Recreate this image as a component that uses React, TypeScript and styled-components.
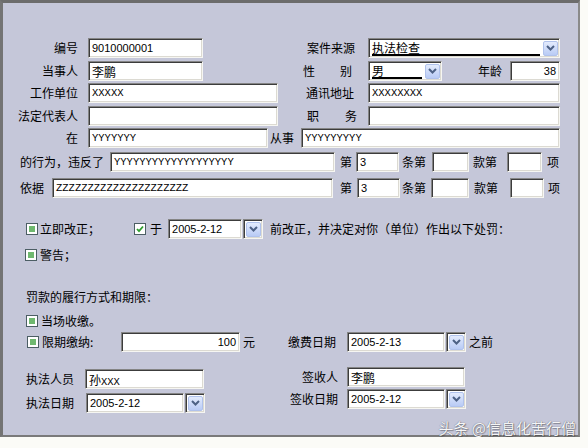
import styled, { createGlobalStyle, css } from "styled-components";

const GlobalStyle = createGlobalStyle`
  html, body {
    margin: 0;
    padding: 0;
    background: #fbfbf7;
  }
  body {
    font-family: "Noto Sans CJK SC", "Liberation Sans", sans-serif;
    font-size: 12px;
    color: #000;
  }
`;

const sunken = css`
  box-sizing: border-box;
  background: #fff;
  border-top: 1px solid #858585;
  border-left: 1px solid #858585;
  border-right: 1px solid #f6f6f2;
  border-bottom: 1px solid #f6f6f2;
  box-shadow: inset 1px 1px 0 #3c3c3c, inset -1px -1px 0 #dcdad2;
`;

const fonts = {
  num: css`
    font-family: "Liberation Sans", "Noto Sans CJK SC", sans-serif;
    font-size: 11px;
  `,
  mono: css`
    font-family: "Liberation Mono", "Noto Sans CJK SC", monospace;
    font-size: 10.5px;
  `,
  cjk: css`
    font-family: "Noto Sans CJK SC", "Liberation Sans", sans-serif;
    font-size: 12px;
  `,
};

type FontKind = keyof typeof fonts;

const Panel = styled.div`
  position: relative;
  box-sizing: border-box;
  width: 580px;
  height: 437px;
  background: #c5c7d9;
  border-top: 3px solid #6c6c6c;
  border-left: 3px solid #747474;
  border-right: 2px solid #8a8a8a;
  border-bottom: 2px solid #7a7a7a;
  display: flex;
  flex-direction: column;
`;

const Row = styled.div<{ $mt: number }>`
  display: flex;
  align-items: center;
  flex: none;
  height: 20px;
  margin-top: ${(p) => p.$mt}px;
`;

const Label = styled.span<{ $w?: number; $ml?: number; $right?: boolean }>`
  flex: none;
  width: ${(p) => (p.$w ? `${p.$w}px` : "auto")};
  margin-left: ${(p) => p.$ml || 0}px;
  text-align: ${(p) => (p.$right ? "right" : "left")};
  line-height: 14px;
  white-space: nowrap;
`;

const Spread = styled(Label)`
  display: flex;
  justify-content: space-between;
`;

const Box = styled.div<{ $w: number; $ml?: number; $right?: boolean; $font?: FontKind }>`
  ${sunken};
  flex: none;
  width: ${(p) => p.$w}px;
  height: 20px;
  margin-left: ${(p) => p.$ml || 0}px;
  padding: 0 3px;
  display: flex;
  align-items: center;
  justify-content: ${(p) => (p.$right ? "flex-end" : "flex-start")};
  white-space: nowrap;
  overflow: hidden;
  ${(p) => fonts[p.$font || "num"]};
`;

const Mono = styled.span`
  ${fonts.mono};
`;

const SelectBox = styled.div<{ $w: number; $ml?: number }>`
  ${sunken};
  flex: none;
  width: ${(p) => p.$w}px;
  height: 20px;
  margin-left: ${(p) => p.$ml || 0}px;
  padding: 0 1px 0 3px;
  display: flex;
  align-items: center;
  gap: 3px;
`;

const Chosen = styled.span`
  flex: 1;
  line-height: 13px;
  margin-top: 1px;
  border-bottom: 2px solid #000;
`;

const DateWrap = styled.div<{ $ml?: number }>`
  flex: none;
  display: flex;
  gap: 1px;
  margin-left: ${(p) => p.$ml || 0}px;
`;

const ButtonWell = styled.div`
  ${sunken};
  width: 20px;
  height: 20px;
  display: flex;
  align-items: center;
  justify-content: center;
`;

const DropBtn = styled.span`
  box-sizing: border-box;
  width: 15px;
  height: 15px;
  border: 1px solid #b0c2ec;
  border-radius: 2px;
  background: linear-gradient(#e3ebfd, #b9cbf5);
  display: flex;
  align-items: center;
  justify-content: center;
`;

const CheckBox = styled.span<{ $ml?: number }>`
  box-sizing: border-box;
  flex: none;
  width: 12px;
  height: 12px;
  margin-left: ${(p) => p.$ml || 0}px;
  border: 1px solid #4c5e64;
  background: #fff;
  display: flex;
  align-items: center;
  justify-content: center;
`;

const Fill = styled.span`
  width: 6px;
  height: 6px;
  background: #6fb86f;
`;

const Bottom = styled.div`
  display: flex;
  margin-top: 15px;
`;

const Column = styled.div<{ $w?: number; $pl?: number; $pt?: number }>`
  display: flex;
  flex-direction: column;
  box-sizing: border-box;
  width: ${(p) => (p.$w ? `${p.$w}px` : "auto")};
  padding-left: ${(p) => p.$pl || 0}px;
  padding-top: ${(p) => p.$pt || 0}px;
`;

const Watermark = styled.div`
  position: absolute;
  right: 2px;
  bottom: -1px;
  font-size: 15px;
  line-height: 17px;
  color: rgba(255, 255, 255, 0.95);
  text-shadow: 0 0 1px rgba(60, 60, 70, 0.8), 1px 1px 1px rgba(0, 0, 0, 0.3);
  white-space: nowrap;
`;

function Chevron() {
  return (
    <svg width="9" height="6" viewBox="0 0 9 6">
      <path d="M1 1l3.5 3.5L8 1" stroke="#4d6185" strokeWidth="2" fill="none" />
    </svg>
  );
}

function Drop() {
  return (
    <DropBtn>
      <Chevron />
    </DropBtn>
  );
}

function DateField({ value, w, ml }: { value: string; w: number; ml?: number }) {
  return (
    <DateWrap $ml={ml}>
      <Box $w={w}>{value}</Box>
      <ButtonWell>
        <Drop />
      </ButtonWell>
    </DateWrap>
  );
}

function Select({ value, w, ml }: { value: string; w: number; ml?: number }) {
  return (
    <SelectBox $w={w} $ml={ml}>
      <Chosen>{value}</Chosen>
      <Drop />
    </SelectBox>
  );
}

function Check({ checked, ml }: { checked?: boolean; ml?: number }) {
  return (
    <CheckBox $ml={ml}>
      {checked ? (
        <svg width="8" height="8" viewBox="0 0 8 8">
          <path d="M1 4l2 2.2L7 1.5" stroke="#2f9e2f" strokeWidth="1.8" fill="none" />
        </svg>
      ) : (
        <Fill />
      )}
    </CheckBox>
  );
}

export default function App() {
  return (
    <>
      <GlobalStyle />
      <Panel>
        <Row $mt={35}>
          <Label $w={75} $right>编号</Label>
          <Box $w={115} $ml={10}>9010000001</Box>
          <Label $w={61} $ml={104}>案件来源</Label>
          <Select value="执法检查" w={192} />
        </Row>
        <Row $mt={3}>
          <Label $w={75} $right>当事人</Label>
          <Box $w={115} $ml={10} $font="cjk">李鹏</Box>
          <Spread $w={49} $ml={100}>
            <span>性</span>
            <span>别</span>
          </Spread>
          <Select value="男" w={74} ml={16} />
          <Label $ml={36}>年龄</Label>
          <Box $w={50} $ml={8} $right>38</Box>
        </Row>
        <Row $mt={2}>
          <Label $w={75} $right>工作单位</Label>
          <Box $w={190} $ml={10} $font="mono">XXXXX</Box>
          <Label $w={62} $ml={28}>通讯地址</Label>
          <Box $w={192} $font="mono">XXXXXXXX</Box>
        </Row>
        <Row $mt={3}>
          <Label $w={75} $right>法定代表人</Label>
          <Box $w={190} $ml={10} />
          <Spread $w={50} $ml={29}>
            <span>职</span>
            <span>务</span>
          </Spread>
          <Box $w={192} $ml={11} />
        </Row>
        <Row $mt={2}>
          <Label $w={75} $right>在</Label>
          <Box $w={180} $ml={10} $font="mono">YYYYYYY</Box>
          <Label $ml={2}>从事</Label>
          <Box $w={259} $ml={7} $font="mono">YYYYYYYYY</Box>
        </Row>
        <Row $mt={4}>
          <Label $w={84} $ml={17}>的行为，违反了</Label>
          <Box $w={225} $ml={6} $font="mono">YYYYYYYYYYYYYYYYYYY</Box>
          <Label $ml={5}>第</Label>
          <Box $w={43} $ml={4}>3</Box>
          <Label $ml={3}>条第</Label>
          <Box $w={37} $ml={6} />
          <Label $ml={4}>款第</Label>
          <Box $w={35} $ml={10} />
          <Label $ml={5}>项</Label>
        </Row>
        <Row $mt={6}>
          <Label $ml={17}>依据</Label>
          <Box $w={281} $ml={8} $font="mono">ZZZZZZZZZZZZZZZZZZZZZ</Box>
          <Label $ml={7}>第</Label>
          <Box $w={43} $ml={5}>3</Box>
          <Label $ml={2}>条第</Label>
          <Box $w={38} $ml={5} />
          <Label $ml={5}>款第</Label>
          <Box $w={34} $ml={12} />
          <Label $ml={4}>项</Label>
        </Row>
        <Row $mt={21}>
          <Check ml={23} />
          <Label $w={60} $ml={2}>立即改正；</Label>
          <Check checked ml={34} />
          <Label $ml={4}>于</Label>
          <DateField value="2005-2-12" w={74} ml={6} />
          <Label $ml={7}>前改正，并决定对你（单位）作出以下处罚：</Label>
        </Row>
        <Row $mt={6}>
          <Check ml={22} />
          <Label $ml={3}>警告；</Label>
        </Row>
        <Row $mt={22}>
          <Label $ml={23}>罚款的履行方式和期限：</Label>
        </Row>
        <Row $mt={4}>
          <Check ml={23} />
          <Label $ml={3}>当场收缴。</Label>
        </Row>
        <Row $mt={1}>
          <Check ml={24} />
          <Label $w={79} $ml={3}>限期缴纳:</Label>
          <Box $w={119} $right>100</Box>
          <Label $w={12} $ml={3}>元</Label>
          <Label $w={59} $ml={33}>缴费日期</Label>
          <DateField value="2005-2-13" w={98} />
          <Label $ml={3}>之前</Label>
        </Row>
        <Bottom>
          <Column $w={284} $pl={23} $pt={2}>
            <Row $mt={0}>
              <Label $w={59}>执法人员</Label>
              <Box $w={119} $font="cjk">
                <span>
                  孙<Mono>XXX</Mono>
                </span>
              </Box>
            </Row>
            <Row $mt={4}>
              <Label $w={60}>执法日期</Label>
              <DateField value="2005-2-12" w={98} />
            </Row>
          </Column>
          <Column>
            <Row $mt={0}>
              <Label $w={51} $right>签收人</Label>
              <Box $w={118} $ml={9} $font="cjk">李鹏</Box>
            </Row>
            <Row $mt={2}>
              <Label $w={51} $right>签收日期</Label>
              <DateField value="2005-2-12" w={98} ml={9} />
            </Row>
          </Column>
        </Bottom>
        <Watermark>头条 @信息化苦行僧</Watermark>
      </Panel>
    </>
  );
}
